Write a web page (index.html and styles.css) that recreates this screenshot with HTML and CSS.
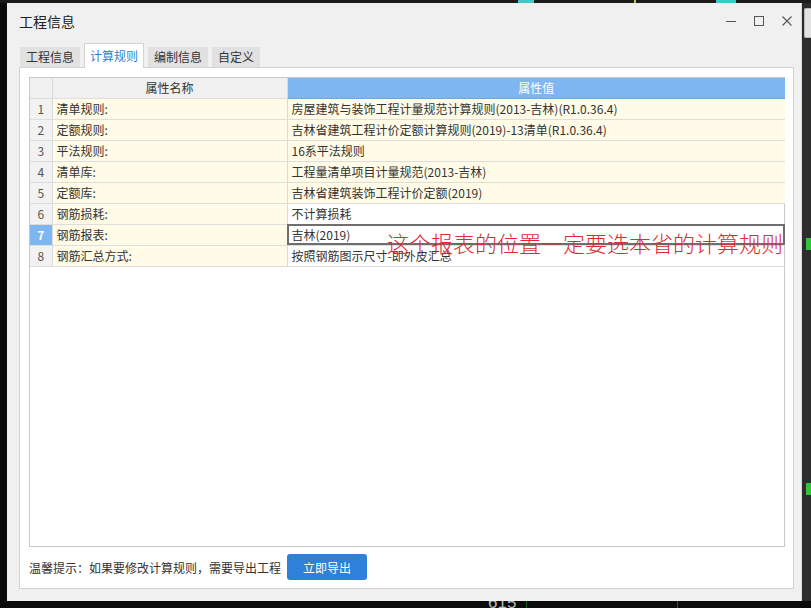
FILE: index.html
```html
<!DOCTYPE html>
<html lang="zh-CN">
<head>
<meta charset="utf-8">
<title>工程信息</title>
<link rel="stylesheet" href="styles.css">
</head>
<body>
<div class="screen">
  <div class="topstrip">
    <span class="tbit cyan1"></span>
    <span class="tbit yellow1"></span>
    <span class="tbit cyan2"></span>
  </div>
  <div class="middle">
    <div class="leftedge"></div>
    <div class="window">
      <div class="titlebar">
        <span class="title">工程信息</span>
        <div class="controls">
          <svg class="ctl" width="10" height="10" viewBox="0 0 10 10"><line x1="0" y1="5.5" x2="10" y2="5.5" stroke="#555" stroke-width="1"/></svg>
          <svg class="ctl" width="10" height="10" viewBox="0 0 10 10"><rect x="0.5" y="0.5" width="9" height="9" fill="none" stroke="#555" stroke-width="1"/></svg>
          <svg class="ctl" width="10" height="10" viewBox="0 0 10 10"><path d="M0.5 0.5 L9.5 9.5 M9.5 0.5 L0.5 9.5" stroke="#555" stroke-width="1.1"/></svg>
        </div>
      </div>
      <div class="tabs">
        <div class="tab">工程信息</div>
        <div class="tab active">计算规则</div>
        <div class="tab">编制信息</div>
        <div class="tab">自定义</div>
      </div>
      <div class="panel">
        <div class="gridbox">
          <table class="grid">
            <colgroup><col class="c1"><col class="c2"><col class="c3"></colgroup>
            <thead>
              <tr><th class="idx"></th><th class="hname">属性名称</th><th class="hval">属性值</th></tr>
            </thead>
            <tbody>
              <tr class="cream"><td class="idx">1</td><td class="name">清单规则:</td><td class="val">房屋建筑与装饰工程计量规范计算规则(2013-吉林)(R1.0.36.4)</td></tr>
              <tr class="cream"><td class="idx">2</td><td class="name">定额规则:</td><td class="val">吉林省建筑工程计价定额计算规则(2019)-13清单(R1.0.36.4)</td></tr>
              <tr class="cream"><td class="idx">3</td><td class="name">平法规则:</td><td class="val">16系平法规则</td></tr>
              <tr class="cream"><td class="idx">4</td><td class="name">清单库:</td><td class="val">工程量清单项目计量规范(2013-吉林)</td></tr>
              <tr class="cream"><td class="idx">5</td><td class="name">定额库:</td><td class="val">吉林省建筑装饰工程计价定额(2019)</td></tr>
              <tr><td class="idx">6</td><td class="name">钢筋损耗:</td><td class="val">不计算损耗</td></tr>
              <tr class="sel"><td class="idx">7</td><td class="name">钢筋报表:</td><td class="val">吉林(2019)</td></tr>
              <tr><td class="idx">8</td><td class="name">钢筋汇总方式:</td><td class="val">按照钢筋图示尺寸-即外皮汇总</td></tr>
            </tbody>
          </table>
        </div>
        <div class="footer">
          <span class="tip">温馨提示：如果要修改计算规则，需要导出工程</span>
          <button class="btn">立即导出</button>
        </div>
      </div>
    </div>
    <div class="rightedge">
      <div class="sidebox"></div>
      <div class="green g1"></div>
      <div class="green g2"></div>
    </div>
  </div>
  <div class="bottomstrip">
    <span class="vline v1"></span>
    <span class="num">615</span>
    <span class="vline v2"></span>
  </div>
  <div class="annotation">这个报表的位置一定要选本省的计算规则</div>
</div>
</body>
</html>
```
FILE: styles.css
```css
* { box-sizing: border-box; }
html, body { margin: 0; padding: 0; background: #0e0e0e; }
body { font-family: "Noto Sans CJK SC", "Microsoft YaHei", "Noto Sans", sans-serif; font-size: 12px; color: #333; }

.screen { position: relative; width: 811px; height: 608px; overflow: hidden; display: flex; flex-direction: column; background: #0e0e0e; }

.topstrip { height: 3px; display: flex; background: #1b1b1b; }
.tbit { height: 3px; }
.cyan1 { margin-left: 518px; width: 16px; background: #3fc9c4; }
.yellow1 { margin-left: 100px; width: 2px; background: #c8c24a; }
.cyan2 { margin-left: 80px; width: 20px; background: #3fc9c4; }

.middle { height: 598px; display: flex; }
.leftedge { width: 7px; background: #0b0b0b; }

.window { width: 795px; background: #f0f0f0; display: flex; flex-direction: column; border-right: 1px solid #d8d8d8; }

.titlebar { height: 40px; display: flex; align-items: flex-start; justify-content: space-between; padding: 8px 9px 0 12px; }
.title { font-size: 14px; color: #222; line-height: 20px; }
.controls { display: flex; gap: 18px; align-items: center; padding-top: 5px; }
.ctl { display: block; }

.tabs { height: 24px; display: flex; align-items: flex-end; gap: 4px; padding-left: 13px; }
.tab { height: 20px; padding: 0 6px; background: #e1e1e1; color: #333; font-size: 12px; line-height: 19px; }
.tab.active { height: 25px; margin-bottom: -1px; padding: 0 5px; background: #fff; color: #2f7fd0; border: 1px solid #d4d4d4; border-bottom: none; line-height: 23px; position: relative; z-index: 1; }

.panel { width: 775px; height: 522px; margin-left: 12px; background: #fff; border: 1px solid #d4d4d4; padding: 9px 8px 0 9px; display: flex; flex-direction: column; }

.gridbox { height: 470px; border: 1px solid #c8c8c8; background: #fff; }
.grid { border-collapse: collapse; table-layout: fixed; width: 755px; }
.c1 { width: 22px; }
.c2 { width: 235px; }
.c3 { width: 498px; }
.grid th, .grid td { padding: 0; border-right: 1px solid #d9d9d9; border-bottom: 1px solid #dedede; white-space: nowrap; overflow: hidden; font-weight: normal; }
.grid th:last-child, .grid td:last-child { border-right: none; }
.grid th { height: 20px; line-height: 19px; background: #f0f0f0; color: #333; text-align: center; }
.grid th.hval { background: #7db6f1; color: #fff; border-bottom-color: #6aa6e2; }
.grid td { height: 21px; line-height: 20px; }
.grid td.idx { text-align: center; background: #f2f2f2; color: #555; }
.grid td.name { padding-left: 4px; background: #fffbe7; }
.grid td.val { padding-left: 4px; }
.grid tr.cream td.val { background: #fffbe7; }
.grid tr.sel td.idx { background: #7db6f1; color: #fff; font-weight: bold; }
.grid tr.sel td.val { outline: 2px solid #6e6e6e; outline-offset: -2px; }

.footer { flex: 1; display: flex; align-items: center; gap: 6px; padding-bottom: 1px; }
.tip { font-size: 12px; color: #333; }
.btn { width: 80px; height: 26px; border: none; border-radius: 3px; background: #2e80d9; color: #fff; font-family: inherit; font-size: 12px; padding: 0; }

.rightedge { flex: 1; background: #2c2c2c; display: flex; flex-direction: column; }
.sidebox { margin: 5px 0 0 2px; height: 30px; background: #e2e2e2; border: 1px solid #b8b8b8; border-right: none; border-radius: 2px 0 0 2px; }
.green { background: #33c23c; width: 5px; height: 12px; margin-left: 4px; }
.g1 { margin-top: 200px; }
.g2 { margin-top: 233px; }

.bottomstrip { height: 7px; display: flex; align-items: stretch; overflow: hidden; background: #0a0a0a; }
.vline { width: 1px; background: #1f5a22; }
.v1 { margin-left: 530px; }
.v2 { margin-left: 150px; }
.num { order: -1; margin-left: 488px; font-family: "Liberation Sans", sans-serif; font-size: 17px; line-height: 4px; color: #b9b9b9; margin-right: -520px; }

.annotation { position: absolute; left: 387px; top: 228px; font-size: 22px; line-height: 28px; color: #dc2b35; letter-spacing: 0; white-space: nowrap; font-weight: 300; }
```
